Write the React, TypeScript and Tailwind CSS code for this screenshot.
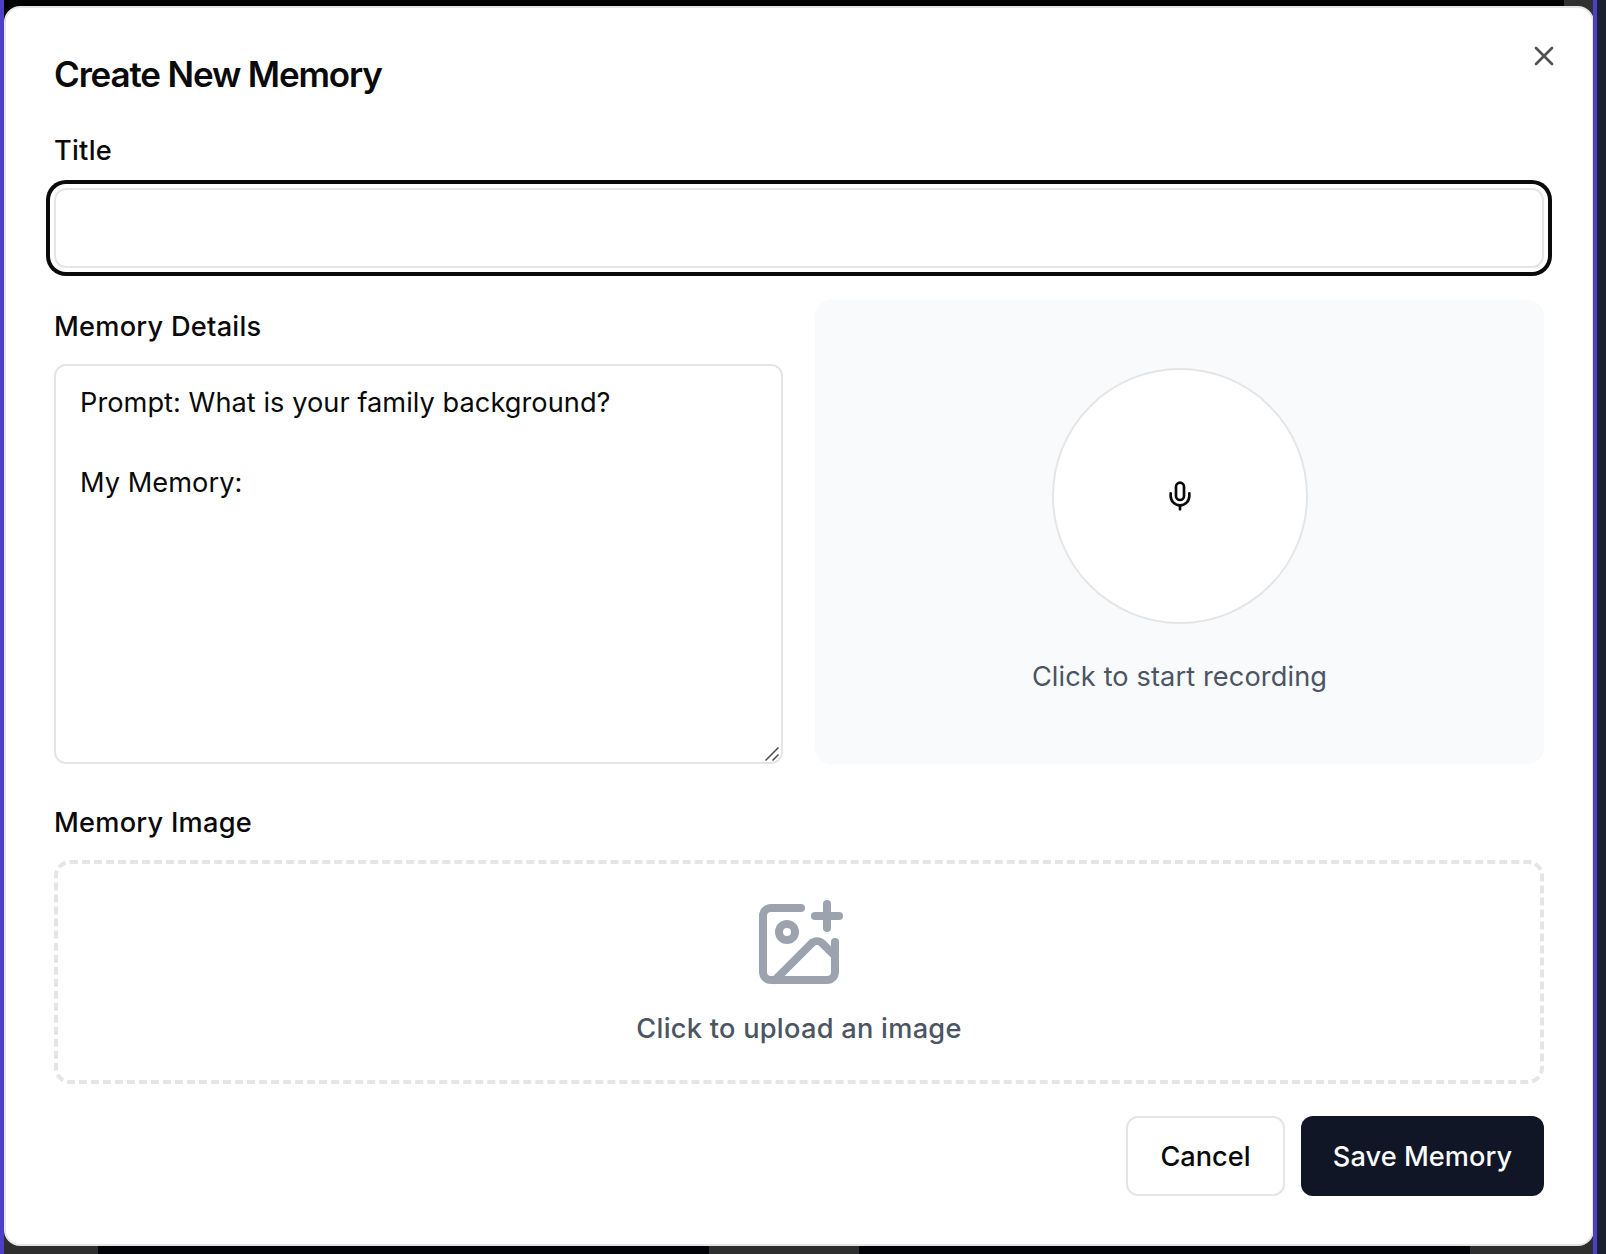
import { ImagePlus, Mic, X } from "lucide-react";

function FieldLabel({ children, htmlFor }: { children: string; htmlFor?: string }) {
  return (
    <label
      htmlFor={htmlFor}
      className="block pt-[13px] pb-[23px] text-[27.2px] leading-[28px] font-[470] tracking-[0.25px]"
    >
      {children}
    </label>
  );
}

function ResizeGrip() {
  return (
    <svg
      className="pointer-events-none absolute right-1 bottom-[3px] h-[14px] w-[14px]"
      viewBox="0 0 14 14"
      fill="none"
      stroke="#4a4a4a"
      strokeWidth="1.5"
    >
      <path d="M0.5 13.5 13.5 0.5M7.5 13.5l6-6" />
    </svg>
  );
}

export default function App() {
  return (
    <div className="flex h-[1254px] w-[1606px] overflow-hidden bg-[#1b202f] font-['Inter',sans-serif] text-[#0a0a0a]">
      <div className="w-1 shrink-0 bg-[#4d40c7]" />
      <div className="flex w-[1589px] shrink-0 flex-col">
        <div className="h-6 shrink-0 bg-[linear-gradient(to_right,#000_1560px,#303030_1560px)]" />
        <div className="relative -mt-[18px] -mb-8 flex h-[1240px] w-[1590px] shrink-0 flex-col rounded-2xl border-2 border-[#e5e5e5] bg-white p-12">
          <h2 className="text-[35px] leading-[36px] font-semibold tracking-[-0.033em]">Create New Memory</h2>
          <button aria-label="Close" className="absolute top-8 right-8 opacity-70">
            <X className="size-8" />
          </button>

          <div className="mt-8">
            <FieldLabel htmlFor="title">Title</FieldLabel>
            <input
              id="title"
              className="block h-20 w-full rounded-xl border-2 border-[#e5e5e5] bg-white px-6 text-[27.2px] ring-4 ring-[#0a0a0a] ring-offset-4 ring-offset-white outline-none"
            />
          </div>

          <div className="mt-8 grid grid-cols-2 gap-8">
            <div>
              <FieldLabel htmlFor="details">Memory Details</FieldLabel>
              <div className="relative">
                <textarea
                  id="details"
                  defaultValue={"Prompt: What is your family background?\n\nMy Memory:"}
                  className="block h-[400px] w-full resize-none rounded-xl border-2 border-[#e5e5e5] bg-white px-6 pt-[17px] pb-4 text-[27.2px] leading-10 tracking-[0.04px] outline-none"
                />
                <ResizeGrip />
              </div>
            </div>
            <div className="flex flex-col items-center justify-center gap-8 rounded-2xl bg-[#f9fafc]">
              <button
                aria-label="Record"
                className="flex size-64 items-center justify-center rounded-full border-2 border-[#e5e5e5] bg-white"
              >
                <Mic className="size-8" />
              </button>
              <p className="h-10 pt-px text-[27.2px] leading-10 tracking-[0.1px] text-[#4b5563]">
                Click to start recording
              </p>
            </div>
          </div>

          <div className="mt-8">
            <FieldLabel>Memory Image</FieldLabel>
            <div className="flex flex-col items-center gap-4 rounded-2xl border-4 border-dashed border-[#e5e5e5] p-8">
              <ImagePlus className="size-24 text-[#9ca3af]" />
              <p className="h-10 pt-px text-[27.2px] leading-10 font-[470] tracking-[0.27px] text-[#4b5563]">
                Click to upload an image
              </p>
            </div>
          </div>

          <div className="mt-8 flex justify-end gap-4">
            <button className="h-20 w-[159px] rounded-xl border-2 border-[#e5e5e5] pt-0.5 text-[27.2px] font-[470]">
              Cancel
            </button>
            <button className="h-20 w-[243px] rounded-xl bg-[#101626] pt-0.5 text-[27.2px] font-[470] tracking-[0.05px] text-[#fafafa]">
              Save Memory
            </button>
          </div>
        </div>
        {/* Dimmed cards behind the dialog */}
        <div className="flex h-10 shrink-0 justify-between bg-[#2e2e2e] pr-[123px] pl-[94px]">
          <div className="w-[611px] bg-[#020306]" />
          <div className="w-[611px] bg-[#020306]" />
        </div>
      </div>
      <div className="relative w-1 shrink-0 bg-[#4d40c7]" />
    </div>
  );
}
